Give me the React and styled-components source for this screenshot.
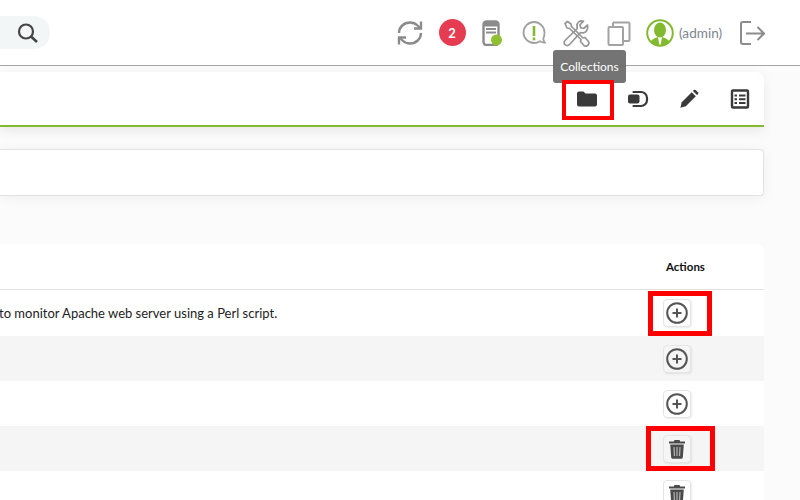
import React from "react";
import styled, { createGlobalStyle } from "styled-components";

const Global = createGlobalStyle`
  html, body {
    margin: 0;
    padding: 0;
    background: #fbfbfb;
    font-family: Lato, "Open Sans", sans-serif;
  }
`;

const Page = styled.div`
  position: relative;
  width: 800px;
  height: 500px;
  overflow: hidden;
  background: #fbfbfb;
`;

const Header = styled.header`
  display: flex;
  align-items: center;
  height: 65px;
  background: #fff;
  border-bottom: 1px solid #a3a7aa;
  box-sizing: content-box;
`;

const SearchBox = styled.div`
  display: flex;
  align-items: center;
  justify-content: flex-end;
  box-sizing: border-box;
  width: 50px;
  height: 33px;
  padding-right: 11px;
  background: #f2f6f7;
  border-radius: 0 16px 16px 0;
`;

const HeaderIcons = styled.div`
  display: flex;
  align-items: center;
  margin-left: 339px;
`;

const Slot = styled.div`
  display: flex;
  align-items: center;
  justify-content: center;
  width: ${(p) => p.$w}px;
  height: 30px;
`;

const Badge = styled.div`
  display: flex;
  align-items: center;
  justify-content: center;
  width: 27px;
  height: 27px;
  border-radius: 50%;
  background: #e63c52;
  color: #fff;
  font-size: 13px;
  font-weight: 700;
`;

const UserName = styled.span`
  margin-left: 3px;
  width: 60px;
  color: #7d8590;
  font-size: 13.6px;
`;

const Content = styled.main`
  width: 764px;
  padding-top: 6px;
`;

const TitleBar = styled.div`
  display: flex;
  justify-content: flex-end;
  align-items: center;
  box-sizing: border-box;
  height: 55px;
  background: #fff;
  border-bottom: 2px solid #82b92e;
  border-radius: 0 8px 0 0;
  box-shadow: 0 4px 12px rgba(0, 0, 0, 0.08);
`;

const TitleIcon = styled.div`
  display: flex;
  align-items: center;
  justify-content: center;
  width: 51px;
  height: 40px;
  margin-right: ${(p) => (p.$last ? "-1px" : "0")};
`;

const FilterPanel = styled.div`
  box-sizing: border-box;
  height: 47px;
  margin-top: 22px;
  background: #fff;
  border: 1px solid #e2e2e2;
  border-left: none;
  border-radius: 0 4px 4px 0;
  box-shadow: 0 2px 14px rgba(0, 0, 0, 0.05);
`;

const Table = styled.section`
  margin-top: 48px;
  background: #fff;
  border-radius: 0 8px 0 0;
`;

const HeadRow = styled.div`
  display: grid;
  grid-template-columns: 663px 1fr;
  align-items: center;
  box-sizing: border-box;
  height: 46px;
  border-bottom: 1px solid #e2e2e2;
`;

const HeadCell = styled.div`
  padding-left: 3px;
  color: #111;
  font-size: 11.5px;
  font-weight: 700;
`;

const Row = styled.div`
  display: grid;
  grid-template-columns: 663px 1fr;
  align-items: center;
  height: ${(p) => p.$h}px;
  background: ${(p) => (p.$alt ? "#f5f5f5" : "#fff")};
`;

const Description = styled.div`
  margin-left: -1px;
  color: #222;
  font-size: 13px;
  white-space: nowrap;
`;

const ActionButton = styled.button`
  display: flex;
  align-items: center;
  justify-content: center;
  box-sizing: border-box;
  width: 28px;
  height: 28px;
  padding: 0;
  background: ${(p) => (p.$alt ? "#f5f5f5" : "#fff")};
  border: 1px solid #e5e5e5;
  border-radius: 4px;
  box-shadow: 1px 1px 2px rgba(0, 0, 0, 0.08);
`;

const Tooltip = styled.div`
  position: absolute;
  top: 50px;
  left: 553px;
  width: 73px;
  height: 33px;
  line-height: 33px;
  text-align: center;
  background: rgba(105, 105, 105, 0.93);
  border-radius: 3px;
  color: #fff;
  font-size: 12px;
`;

const Highlight = styled.div`
  position: absolute;
  box-sizing: border-box;
  top: ${(p) => p.$top}px;
  left: ${(p) => p.$left}px;
  width: ${(p) => p.$w}px;
  height: ${(p) => p.$h}px;
  border: ${(p) => p.$b}px solid #f00;
`;

const SearchIcon = () => (
  <svg width="22" height="22" viewBox="0 0 22 22" fill="none" stroke="#454545" strokeWidth="2.2">
    <circle cx="9" cy="9.500" r="7" />
    <path d="M14 14.500l6 5.500" strokeWidth="2.600" />
  </svg>
);

const SyncIcon = () => (
  <svg width="28" height="28" viewBox="0 0 28 28" fill="none" stroke="#8b8b8b" strokeWidth="2.4">
    <path d="M3 14C3 8 8 3.500 14 3.500c3 0 5.500 1 7.500 3L24 9" />
    <path d="M25 14c0 6-5 10.500-11 10.500-3 0-5.500-1-7.500-3L4 19" />
    <path d="M25 2.500V9.500h-7" />
    <path d="M3 25.500V18.500h7" />
  </svg>
);

const ServerIcon = () => (
  <svg width="20" height="26" viewBox="0 0 20 26">
    <rect x="1.500" y="1.500" width="15" height="23.500" rx="3" fill="#fff" stroke="#8b8b8b" strokeWidth="2.4" />
    <rect x="1.500" y="1.500" width="15" height="5" rx="2" fill="#8b8b8b" />
    <path d="M4 9h10M4 12.500h10" stroke="#8b8b8b" strokeWidth="2" />
    <circle cx="14.500" cy="20" r="5.500" fill="#8fc031" />
  </svg>
);

const AlertIcon = () => (
  <svg width="26" height="26" viewBox="0 0 26 26" fill="none">
    <path
      d="M23.500 12.500A10.500 10.500 0 1 0 13 23c3 0 4.500-.8 6-1.800 1.500.9 3 1.500 4.800 1.300-1-1.300-1.500-2.500-1.500-3.700 1-1.800 1.200-4 1.200-6.300z"
      stroke="#a0a0a0"
      strokeWidth="1.800"
    />
    <path d="M13 6v10" stroke="#82b92e" strokeWidth="2.600" />
    <path d="M13 17.500v2.800" stroke="#82b92e" strokeWidth="2.600" />
  </svg>
);

const ToolsIcon = () => (
  <svg width="28" height="28" viewBox="0 0 28 28" fill="none" stroke="#969696" strokeWidth="1.700" strokeLinejoin="round">
    <path d="M3 4.500L5.500 2.500 9 5l.5 2.500L21 19l2-.5 3 3.500a3 3 0 0 1-4.500 4l-3-3.500.5-2L7.500 9.500 5 9z" />
    <path d="M25.500 6l-3.800 3.500-3-.8-.8-2.900L21.500 2.200c-3.500-1.100-7 1.300-6.500 5.300l.3 2L3 21.500a3 3 0 0 0 4.300 4.200L18.500 13.500l2 .3c3.700.4 6-3.800 5-7.800z" />
  </svg>
);

const CopyIcon = () => (
  <svg width="24" height="26" viewBox="0 0 24 26" fill="none" stroke="#a3a3a3" strokeWidth="2">
    <path d="M6 2.500h15.500a1 1 0 0 1 1 1V20a1 1 0 0 1-1 1H16" />
    <path d="M6 2.500V7" />
    <rect x="1.500" y="7" width="14.500" height="18" rx="1" />
  </svg>
);

const Avatar = () => (
  <svg width="28" height="28" viewBox="0 0 28 28">
    <circle cx="14" cy="14" r="12.800" fill="#fff" stroke="#82b92e" strokeWidth="2" />
    <ellipse cx="14" cy="11" rx="6" ry="7.500" fill="#82b92e" />
    <path d="M4.500 23c1.500-3 4.500-4 7.500-5l1.300 7.800h1.400L16 18c3 1 6 2 7.500 5-2.500 2.500-6 3.800-9.500 3.800S7 25.500 4.500 23z" fill="#82b92e" />
  </svg>
);

const LogoutIcon = () => (
  <svg width="26" height="26" viewBox="0 0 26 26" fill="none" stroke="#8b8b8b" strokeWidth="2">
    <path d="M12 2H4a2 2 0 0 0-2 2v18a2 2 0 0 0 2 2h8" />
    <path d="M7 13.500h18M18.500 7l6.500 6.500-6.500 6.500" />
  </svg>
);

const FolderIcon = () => (
  <svg width="20" height="16" viewBox="0 0 20 16">
    <path d="M0 2.500A2 2 0 0 1 2 .5h4.500l2 2H18a2 2 0 0 1 2 2v9a2 2 0 0 1-2 2H2a2 2 0 0 1-2-2z" fill="#3a3a3a" />
  </svg>
);

const PluginIcon = () => (
  <svg width="22" height="18" viewBox="0 0 22 18" fill="none">
    <rect x="1" y="4.500" width="11.500" height="9" rx="2" fill="#3a3a3a" />
    <path d="M6.500 2h7.500a6 6 0 0 1 6 6v2a6 6 0 0 1-6 6H6.500" stroke="#3a3a3a" strokeWidth="2.200" strokeLinecap="round" />
  </svg>
);

const PencilIcon = () => (
  <svg width="20" height="20" viewBox="0 0 22 22">
    <path d="M1.500 20.500l1.500-6L14 3.500l4.500 4.500L7.500 19z" fill="#3a3a3a" />
    <path d="M15.300 2.200l1-1a1.500 1.500 0 0 1 2 0l2.500 2.500a1.500 1.500 0 0 1 0 2l-1 1z" fill="#3a3a3a" />
  </svg>
);

const ListIcon = () => (
  <svg width="20" height="20" viewBox="0 0 20 20" fill="none" stroke="#3a3a3a">
    <rect x="2" y="1.500" width="16" height="17" rx="1" strokeWidth="2.400" />
    <path d="M4.500 6.500h2.500M9 6.500h6.500M4.500 10.250h2.500M9 10.250h6.500M4.500 14h2.500M9 14h6.500" strokeWidth="2" />
  </svg>
);

const PlusIcon = () => (
  <svg width="22" height="22" viewBox="0 0 22 22" fill="none" stroke="#555" strokeWidth="2">
    <circle cx="11" cy="11" r="9.800" />
    <path d="M11 6.500v9M6.500 11h9" />
  </svg>
);

const TrashIcon = () => (
  <svg width="18" height="20" viewBox="0 0 18 20">
    <path d="M6.500 1h5l.7 1.500H17v2H1v-2h4.800z" fill="#4a4a4a" />
    <path d="M2.200 5.500h13.600l-1 13a1.500 1.500 0 0 1-1.500 1.300H4.700a1.500 1.500 0 0 1-1.500-1.300z" fill="#4a4a4a" />
    <path d="M6 8l.4 9M9 8v9M12 8l-.4 9" stroke="#c9c9c9" strokeWidth="1" />
  </svg>
);

const rows = [
  { h: 46, icon: "add", text: "to monitor Apache web server using a Perl script." },
  { h: 45, icon: "add", alt: true },
  { h: 45, icon: "add" },
  { h: 45, icon: "trash", alt: true },
  { h: 45, icon: "trash" },
];

export default function App() {
  return (
    <Page>
      <Global />
      <Header>
        <SearchBox>
          <SearchIcon />
        </SearchBox>
        <HeaderIcons>
          <Slot $w={42}><SyncIcon /></Slot>
          <Slot $w={42}><Badge>2</Badge></Slot>
          <Slot $w={37}><ServerIcon /></Slot>
          <Slot $w={48}><AlertIcon /></Slot>
          <Slot $w={36}><ToolsIcon /></Slot>
          <Slot $w={50}><CopyIcon /></Slot>
          <Slot $w={32}><Avatar /></Slot>
          <UserName>(admin)</UserName>
          <Slot $w={26}><LogoutIcon /></Slot>
        </HeaderIcons>
      </Header>
      <Content>
        <TitleBar>
          <TitleIcon><FolderIcon /></TitleIcon>
          <TitleIcon><PluginIcon /></TitleIcon>
          <TitleIcon><PencilIcon /></TitleIcon>
          <TitleIcon $last><ListIcon /></TitleIcon>
        </TitleBar>
        <FilterPanel />
        <Table>
          <HeadRow>
            <div />
            <HeadCell>Actions</HeadCell>
          </HeadRow>
          {rows.map((r, i) => (
            <Row key={i} $h={r.h} $alt={r.alt}>
              <Description>{r.text}</Description>
              <ActionButton $alt={r.alt}>
                {r.icon === "add" ? <PlusIcon /> : <TrashIcon />}
              </ActionButton>
            </Row>
          ))}
        </Table>
      </Content>
      <Tooltip>Collections</Tooltip>
      <Highlight $top={80} $left={562} $w={52} $h={40} $b={4} />
      <Highlight $top={291} $left={648} $w={64} $h={45} $b={5} />
      <Highlight $top={426} $left={646} $w={69} $h={45} $b={5} />
    </Page>
  );
}
